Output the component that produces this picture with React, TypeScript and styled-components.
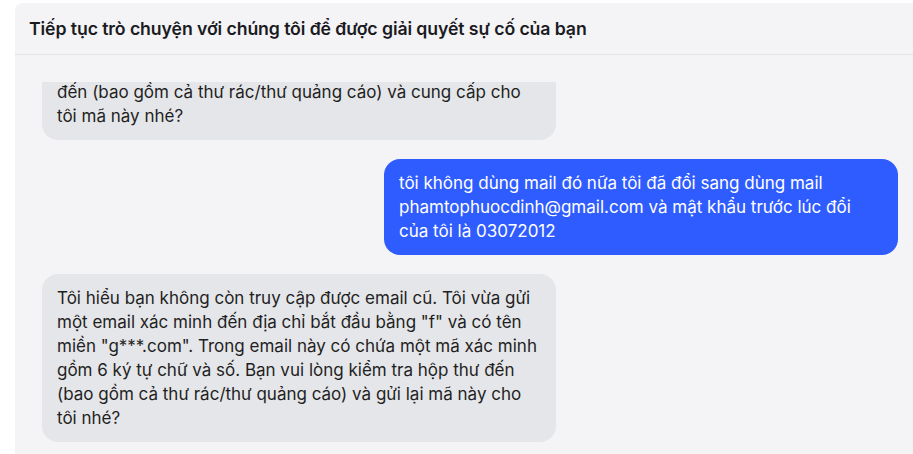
import styled, { createGlobalStyle } from 'styled-components'

const GlobalStyle = createGlobalStyle`
  html, body {
    margin: 0;
    padding: 0;
    background: #ffffff;
    overflow: hidden;
  }
  body {
    font-family: Inter, "Noto Sans", sans-serif;
  }
`

const Page = styled.div`
  height: 454px;
  padding: 3px 0 0 15px;
  box-sizing: border-box;
`

const Panel = styled.section`
  width: 898px;
  height: 100%;
  background: #f4f4f6;
  border-top-left-radius: 8px;
  display: flex;
  flex-direction: column;
`

const Header = styled.header`
  height: 51px;
  border-bottom: 1px solid #e2e3e6;
  display: flex;
  align-items: center;
  padding-left: 14px;
  font-size: 17.7px;
  font-weight: 600;
  letter-spacing: -0.1px;
  color: #1b1b1f;
`

const Thread = styled.div`
  flex: 1;
  margin-top: 27px;
  overflow: hidden;
  display: flex;
  flex-direction: column;
  gap: 19px;
  padding: 0 15px 0 27px;
`

const Bubble = styled.div<{ $mine?: boolean; $clipped?: boolean }>`
  width: 514px;
  box-sizing: border-box;
  padding: ${(p) => (p.$clipped ? '0 8px 12px 15px' : '12px 8px 12px 15px')};
  margin-top: ${(p) => (p.$clipped ? '-2px' : '0')};
  align-self: ${(p) => (p.$mine ? 'flex-end' : 'flex-start')};
  background: ${(p) => (p.$mine ? '#2f5cff' : '#e5e6e9')};
  color: ${(p) => (p.$mine ? '#ffffff' : '#1f1f23')};
  border-radius: ${(p) => (p.$clipped ? '0 0 16px 16px' : '16px')};
  font-size: 17px;
  line-height: 24px;
  flex-shrink: 0;
`

export default function App() {
  return (
    <>
      <GlobalStyle />
      <Page>
        <Panel>
          <Header>Tiếp tục trò chuyện với chúng tôi để được giải quyết sự cố của bạn</Header>
          <Thread>
            <Bubble $clipped>
              đến (bao gồm cả thư rác/thư quảng cáo) và cung cấp cho
              <br />
              tôi mã này nhé?
            </Bubble>
            <Bubble $mine>
              tôi không dùng mail đó nữa tôi đã đổi sang dùng mail
              <br />
              phamtophuocdinh@gmail.com và mật khẩu trước lúc đổi
              <br />
              của tôi là 03072012
            </Bubble>
            <Bubble>
              Tôi hiểu bạn không còn truy cập được email cũ. Tôi vừa gửi
              <br />
              một email xác minh đến địa chỉ bắt đầu bằng "f" và có tên
              <br />
              miền "g***.com". Trong email này có chứa một mã xác minh
              <br />
              gồm 6 ký tự chữ và số. Bạn vui lòng kiểm tra hộp thư đến
              <br />
              (bao gồm cả thư rác/thư quảng cáo) và gửi lại mã này cho
              <br />
              tôi nhé?
            </Bubble>
          </Thread>
        </Panel>
      </Page>
    </>
  )
}
